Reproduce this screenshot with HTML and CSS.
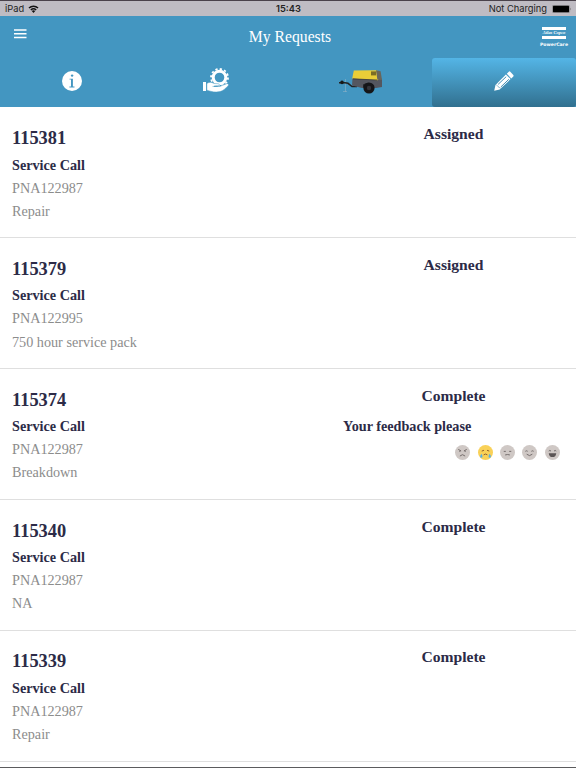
FILE: index.html
```html
<!DOCTYPE html>
<html lang="en">
	<head>
		<meta charset="UTF-8" />
		<meta name="viewport" content="width=device-width, initial-scale=1.0" />
		<title>My Requests</title>
		<link rel="stylesheet" href="styles.css">
	</head>

	<body>
		<div class="statusbar">
			<div class="device">
				<span>iPad</span>
				<svg class="wifi" viewBox="0 0 20 15">
					<path d="M1.5 5.5a12.5 12.5 0 0 1 17 0M5 9.3a7.4 7.4 0 0 1 10 0" fill="none" stroke="#111" stroke-width="2.8" />
					<path d="M10 14.8 6.8 11.4a4.6 4.6 0 0 1 6.4 0z" fill="#111" />
				</svg>
			</div>
			<span class="clock">15:43</span>
			<div class="power">
				<span>Not Charging</span>
				<svg class="battery" viewBox="0 0 20 8">
					<rect x=".4" y=".2" width="17.2" height="7.6" rx="1.4" fill="none" stroke="#666" stroke-width=".5" />
					<rect x="1" y=".8" width="16" height="6.4" rx=".6" fill="#000" />
					<path d="M18.4 2.7q1.2 1.3 0 2.6z" fill="#555" />
				</svg>
			</div>
		</div>

		<header>
			<div class="titlebar">
				<button class="menu" aria-label="Menu">
					<svg width="13" height="10" viewBox="0 0 13 10">
						<path d="M0 1h12.5M0 4.8h12.5M0 8.6h12.5" stroke="#fff" stroke-width="1.5" />
					</svg>
				</button>
				<h1>My Requests</h1>
				<div class="brand">
					<div class="brand-name">Atlas Copco</div>
					<div class="brand-sub">PowerCare</div>
				</div>
			</div>

			<nav>
				<a href="#">
					<svg width="20" height="20" viewBox="0 0 20 20">
						<circle cx="10" cy="10" r="10" fill="#fff" />
						<circle cx="10.1" cy="4.6" r="1.2" fill="#4396c1" />
						<path d="M7.5 7.7h3.4v7.8h1.6v.9H7.4v-.9H9V8.6H7.5z" fill="#4396c1" />
					</svg>
				</a>
				<a href="#">
					<svg width="26" height="26" viewBox="0 0 26 26">
						<circle cx="16.5" cy="9.5" r="6.3" fill="none" stroke="#fff" stroke-width="3" />
						<circle cx="16.5" cy="9.5" r="8.5" fill="none" stroke="#fff" stroke-width="1.8" stroke-dasharray="2.25 2.2" />
						<path d="M0 14h3v9H0z" fill="#fff" />
						<path d="M3.8 15.4c2.8-1.6 5-1.3 7 .1l4.4.2c1.7.3 1.6 2-.1 2.1l-4 .2v.5h5.5l6.9-2.7c1.8-.7 2.8.9 1.5 2.1-2.5 2.6-4.8 4.8-7.9 5.7-4.8 1.2-8.9-.1-13.3-1.4z" fill="#fff" stroke="#4396c1" stroke-width=".5" />
						<path d="M9.5 18.4h5.8" stroke="#4396c1" stroke-width=".5" />
					</svg>
				</a>
				<a href="#">
					<svg class="trailer" width="46" height="26" viewBox="0 0 46 26">
						<path d="M7.5 10v13M5 22.5h4" stroke="#83aec5" stroke-width=".7" />
						<path d="M1 13.8h6l3 .5 4 3.2h5" fill="none" stroke="#222" stroke-width="1.5" />
						<circle cx="4" cy="13.4" r="1.8" fill="#181818" />
						<path d="M14.5 9 43 9l1 2v7l-6 1H24l-10-2.5z" fill="#54565f" />
						<path d="M15.8 1.4 38 1.2l3.5 1.4 1 6.7-3 2L14.2 9.5z" fill="#e9cd38" />
						<path d="m38 1.2 4.6 1 1.4 8.8-4.6-.2z" fill="#68655c" />
						<path d="M33 2.4h5v4h-5z" fill="#7c6d25" />
						<path d="M15 9.9 39 11" stroke="#34353b" stroke-width=".8" />
						<path d="M25 15.5q6-4 11 1v2H25z" fill="#24252a" />
						<circle cx="31" cy="19" r="5.6" fill="#151518" />
						<circle cx="31" cy="19" r="2.2" fill="#34343a" />
					</svg>
				</a>
				<a href="#" class="active">
					<svg width="20" height="20" viewBox="0 0 20 20">
						<path d="m12.8 2.7 2-2q.7-.7 1.5 0L19.3 4q.7.8 0 1.5l-2 2z" fill="#fff" />
						<path d="m11.9 3.4 4.7 4.7L5.7 18.4.2 19.8l1.3-5.8z" fill="#fff" />
						<path d="m4.1 13.4 8.1-7.7M6.8 16l8-7.7" fill="none" stroke="#438fb6" stroke-width="1" />
						<path d="m2.4 13.7 1.5 1.8 2.5 1.7" fill="none" stroke="#438fb6" stroke-width=".6" />
					</svg>
				</a>
			</nav>
		</header>

		<!-- face shapes shared by the rating buttons -->
		<svg class="symbols">
			<symbol id="face-angry" viewBox="0 0 16 16">
				<path d="m3.5 4.7 3 1.6m6-1.6-3 1.6M5.2 6v1.5M10.8 6v1.5M5.2 11.8q2.8-3 5.6 0" />
			</symbol>
			<symbol id="face-sad" viewBox="0 0 16 16">
				<path d="m4 6.5 2.4-.9m5.6.9-2.4-.9M6 10.5q2-1.7 4 0" />
				<path class="tear" d="M3.7 9.2q-3 4 0 4.3 2.2-.4 0-4.3zM12.3 9.2q-2.2 4 0 4.3 3-.4 0-4.3z" />
			</symbol>
			<symbol id="face-flat" viewBox="0 0 16 16">
				<path d="M4 6.8h2.2m3.6 0H12M5.5 10.6q2.5-.9 5 0" />
			</symbol>
			<symbol id="face-smile" viewBox="0 0 16 16">
				<path d="M3.6 6.7q1.2-1 2.4 0m4 0q1.2-1 2.4 0M5 9.8q3 3 6 0" />
			</symbol>
			<symbol id="face-laugh" viewBox="0 0 16 16">
				<path d="M4 6.5q1.2-1.4 2.4 0m3.2 0q1.2-1.4 2.4 0" />
				<path class="mouth" d="M4 8.7h8q-.5 4.2-4 4.2t-4-4.2z" />
			</symbol>
		</svg>

		<main>
			<article>
				<div class="info">
					<h2>115381</h2>
					<h3>Service Call</h3>
					<p>PNA122987</p>
					<p>Repair</p>
				</div>
				<div class="state">
					<div class="status">Assigned</div>
				</div>
			</article>

			<article>
				<div class="info">
					<h2>115379</h2>
					<h3>Service Call</h3>
					<p>PNA122995</p>
					<p>750 hour service pack</p>
				</div>
				<div class="state">
					<div class="status">Assigned</div>
				</div>
			</article>

			<article>
				<div class="info">
					<h2>115374</h2>
					<h3>Service Call</h3>
					<p>PNA122987</p>
					<p>Breakdown</p>
				</div>
				<div class="state">
					<div class="status">Complete</div>
					<div class="feedback">Your feedback please</div>
					<div class="faces">
						<svg><use href="#face-angry" /></svg>
						<svg class="selected"><use href="#face-sad" /></svg>
						<svg><use href="#face-flat" /></svg>
						<svg><use href="#face-smile" /></svg>
						<svg><use href="#face-laugh" /></svg>
					</div>
				</div>
			</article>

			<article>
				<div class="info">
					<h2>115340</h2>
					<h3>Service Call</h3>
					<p>PNA122987</p>
					<p>NA</p>
				</div>
				<div class="state">
					<div class="status">Complete</div>
				</div>
			</article>

			<article>
				<div class="info">
					<h2>115339</h2>
					<h3>Service Call</h3>
					<p>PNA122987</p>
					<p>Repair</p>
				</div>
				<div class="state">
					<div class="status">Complete</div>
				</div>
			</article>
		</main>
	</body>
</html>
```

FILE: styles.css
```css
* {
	box-sizing: border-box;
}
body {
	display: flex;
	flex-direction: column;
	height: 768px;
	margin: 0;
	overflow: hidden;
	background: #fff;
	border-bottom: 1px solid #5b5b5d;
	font-family: "Liberation Serif", serif;
}
h1,
h2,
h3,
p {
	margin: 0;
}

/* status bar */
.statusbar {
	display: grid;
	grid-template-columns: 1fr auto 1fr;
	align-items: center;
	flex: none;
	height: 16px;
	padding: 0 4px 0 5px;
	border-top: 1px solid #4a424b;
	background: #bfbcc3;
	color: #222;
	font-family: Inter, sans-serif;
	font-size: 9.3px;
}
.device,
.power {
	display: flex;
	align-items: center;
	gap: 5px;
}
.power {
	justify-content: flex-end;
}
.clock {
	font-weight: 600;
}
.wifi {
	width: 11px;
	height: 8px;
	margin-left: -1px;
}
.battery {
	width: 20px;
	height: 8px;
}

/* header */
header {
	flex: none;
	height: 91px;
	background: #4396c1;
}
.titlebar {
	display: grid;
	grid-template-columns: 60px 1fr 60px;
	height: 42px;
}
.menu {
	display: flex;
	margin: 13px 0 0 13.5px;
	padding: 0;
	border: 0;
	background: none;
}
h1 {
	color: #fff;
	font-size: 15.7px;
	font-weight: normal;
	line-height: 42px;
	text-align: center;
	padding-left: 4px;
}
.brand {
	display: flex;
	flex-direction: column;
	align-items: center;
	padding: 11px 0 0 16px;
	color: #fff;
}
.brand-name {
	width: 24px;
	height: 12px;
	border: solid #fff;
	border-width: 3px 0;
	font: italic bold 4.5px/6px "Liberation Serif", serif;
	text-align: center;
	white-space: nowrap;
}
.brand-sub {
	margin-top: 3px;
	font: bold 4.6px/6px "DejaVu Sans", sans-serif;
}
nav {
	display: grid;
	grid-template-columns: repeat(4, 1fr);
	height: 49px;
}
nav a {
	display: flex;
	align-items: center;
	justify-content: center;
	padding-bottom: 3px;
}
nav .active {
	border-radius: 3px;
	background: linear-gradient(#54b5e6, #31708f);
}
.trailer {
	margin: 2px 0 0 2px;
}

/* requests */
main {
	flex: 1;
	min-height: 0;
	padding-top: 0.6px;
	overflow: hidden;
}
article {
	display: flex;
	justify-content: space-between;
	height: 130.8px;
	padding: 18.6px 12px 0;
	border-bottom: 1px solid #dfdfdf;
}
h2,
h3,
.status,
.feedback {
	color: #2c2b47;
	font-weight: bold;
}
h2 {
	font-size: 18.4px;
	line-height: 24px;
}
h3 {
	margin-top: 3.4px;
	font-size: 14.2px;
	line-height: 23px;
}
p {
	color: #8c8c8c;
	font-size: 14.2px;
	line-height: 23.2px;
}
.state {
	display: flex;
	flex-direction: column;
	width: 221px;
}
.status {
	width: 66px;
	margin-left: 77.5px;
	font-size: 15.6px;
	line-height: 16px;
	text-align: center;
}
.feedback {
	margin-top: 14px;
	font-size: 14.2px;
	line-height: 16px;
}
.symbols {
	position: absolute;
	width: 0;
	height: 0;
}
.faces {
	display: flex;
	gap: 7.3px;
	margin: 11px 4.4px 0 auto;
}
.faces svg {
	width: 15px;
	height: 15px;
	border-radius: 50%;
	background: #cfc8c5;
	fill: none;
	stroke: #6f6866;
	stroke-width: 1;
}
.faces .selected {
	background: #f9d158;
	stroke: #8a5a2a;
}
.tear {
	fill: #58aee6;
	stroke: none;
}
.mouth {
	fill: #5b5555;
	stroke: none;
}
```
